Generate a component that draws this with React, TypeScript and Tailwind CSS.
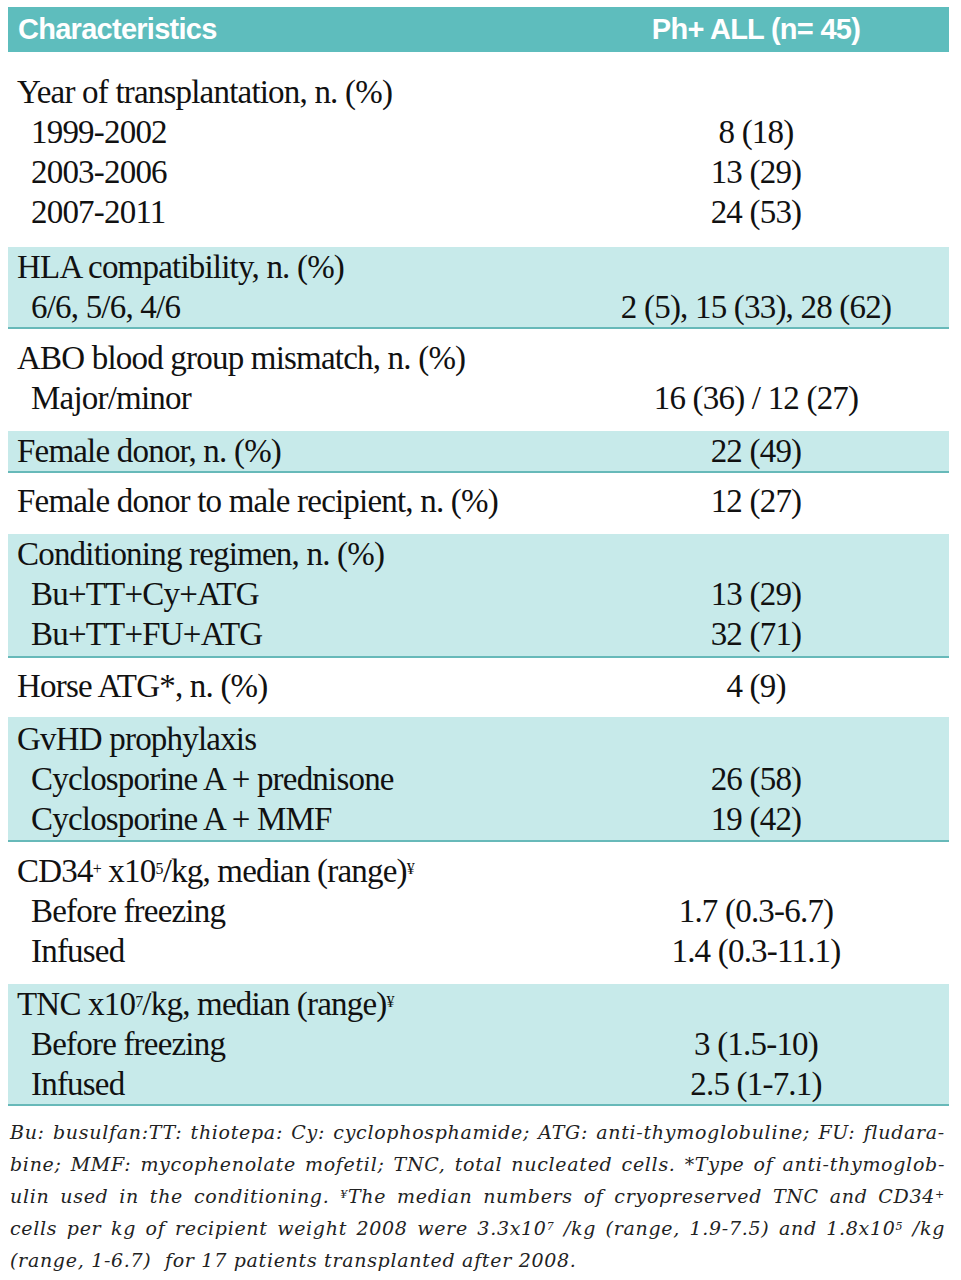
const serif = "font-['Liberation_Serif',serif]"

type Row = { label: React.ReactNode; value?: string; sub?: boolean }
type Group = { shaded?: boolean; pad: string; rows: Row[] }

const groups: Group[] = [
  {
    pad: 'pt-[20px] pb-[15px]',
    rows: [
      { label: 'Year of transplantation, n. (%)' },
      { label: '1999-2002', value: '8 (18)', sub: true },
      { label: '2003-2006', value: '13 (29)', sub: true },
      { label: '2007-2011', value: '24 (53)', sub: true },
    ],
  },
  {
    shaded: true,
    pad: 'pt-0 pb-0',
    rows: [
      { label: 'HLA compatibility, n. (%)' },
      { label: '6/6, 5/6, 4/6', value: '2 (5), 15 (33), 28 (62)', sub: true },
    ],
  },
  {
    pad: 'pt-[9px] pb-[13px]',
    rows: [
      { label: 'ABO blood group mismatch, n. (%)' },
      { label: 'Major/minor', value: '16 (36) / 12 (27)', sub: true },
    ],
  },
  {
    shaded: true,
    pad: 'pt-0 pb-0',
    rows: [{ label: 'Female donor, n. (%)', value: '22 (49)' }],
  },
  {
    pad: 'pt-[8px] pb-[13px]',
    rows: [{ label: 'Female donor to male recipient, n. (%)', value: '12 (27)' }],
  },
  {
    shaded: true,
    pad: 'pt-0 pb-[2px]',
    rows: [
      { label: 'Conditioning regimen, n. (%)' },
      { label: 'Bu+TT+Cy+ATG', value: '13 (29)', sub: true },
      { label: 'Bu+TT+FU+ATG', value: '32 (71)', sub: true },
    ],
  },
  {
    pad: 'pt-[8px] pb-[11px]',
    rows: [{ label: 'Horse ATG*, n. (%)', value: '4 (9)' }],
  },
  {
    shaded: true,
    pad: 'pt-[2px] pb-[1px]',
    rows: [
      { label: 'GvHD prophylaxis' },
      { label: 'Cyclosporine A + prednisone', value: '26 (58)', sub: true },
      { label: 'Cyclosporine A + MMF', value: '19 (42)', sub: true },
    ],
  },
  {
    pad: 'pt-[9px] pb-[13px]',
    rows: [
      {
        label: (
          <>
            CD34<sup className="text-[16px]">+</sup> x10<sup className="text-[16px]">5</sup>/kg, median (range)
            <sup className="text-[16px]">¥</sup>
          </>
        ),
      },
      { label: 'Before freezing', value: '1.7 (0.3-6.7)', sub: true },
      { label: 'Infused', value: '1.4 (0.3-11.1)', sub: true },
    ],
  },
  {
    shaded: true,
    pad: 'pt-0 pb-0',
    rows: [
      {
        label: (
          <>
            TNC x10<sup className="text-[16px]">7</sup>/kg, median (range)<sup className="text-[16px]">¥</sup>
          </>
        ),
      },
      { label: 'Before freezing', value: '3 (1.5-10)', sub: true },
      { label: 'Infused', value: '2.5 (1-7.1)', sub: true },
    ],
  },
]

const Line = ({ children, last }: { children: React.ReactNode; last?: boolean }) => (
  <div className={last ? 'whitespace-nowrap' : 'whitespace-nowrap text-justify [text-align-last:justify]'}>
    {children}
  </div>
)

const App = () => {
  return (
    <div className="w-[961px] h-[1280px] bg-white pt-[7px]">
      <div className="ml-[8px] w-[941px]">
        <div className="flex h-[45px] items-center bg-[#5ebdbd] text-white font-['Liberation_Sans',sans-serif] font-bold text-[29px] tracking-tight">
          <div className="w-[555px] pl-[10px]">Characteristics</div>
          <div className="flex-1 text-center">Ph+ ALL (n= 45)</div>
        </div>

        {groups.map((g, i) => (
          <div
            key={i}
            className={`${g.pad} ${g.shaded ? 'bg-[#c7eaea] border-b-2 border-[#67b9b9]' : ''} ${serif} text-[33px] leading-[40px] tracking-[-0.8px] text-[#111]`}
          >
            {g.rows.map((r, j) => (
              <div key={j} className="flex h-[40px]">
                <div className={`w-[555px] whitespace-nowrap ${r.sub ? 'pl-[23px]' : 'pl-[9px]'}`}>{r.label}</div>
                <div className="flex-1 text-center whitespace-nowrap">{r.value}</div>
              </div>
            ))}
          </div>
        ))}
      </div>

      <div className="ml-[10px] w-[935px] mt-[10px] font-['DejaVu_Serif',serif] italic text-[19px] tracking-[0.7px] leading-[32px] text-[#222]">
        <Line>Bu: busulfan:TT: thiotepa: Cy: cyclophosphamide; ATG: anti-thymoglobuline; FU: fludara-</Line>
        <Line>bine; MMF: mycophenolate mofetil; TNC, total nucleated cells. *Type of anti-thymoglob-</Line>
        <Line>
          ulin used in the conditioning. <sup className="text-[11px]">¥</sup>The median numbers of cryopreserved TNC and CD34
          <sup className="text-[11px]">+</sup>
        </Line>
        <Line>
          cells per kg of recipient weight 2008 were 3.3x10<sup className="text-[11px]">7</sup> /kg (range, 1.9-7.5) and
          1.8x10<sup className="text-[11px]">5</sup> /kg
        </Line>
        <Line last>(range, 1-6.7)&nbsp; for 17 patients transplanted after 2008.</Line>
      </div>
    </div>
  )
}

export default App
